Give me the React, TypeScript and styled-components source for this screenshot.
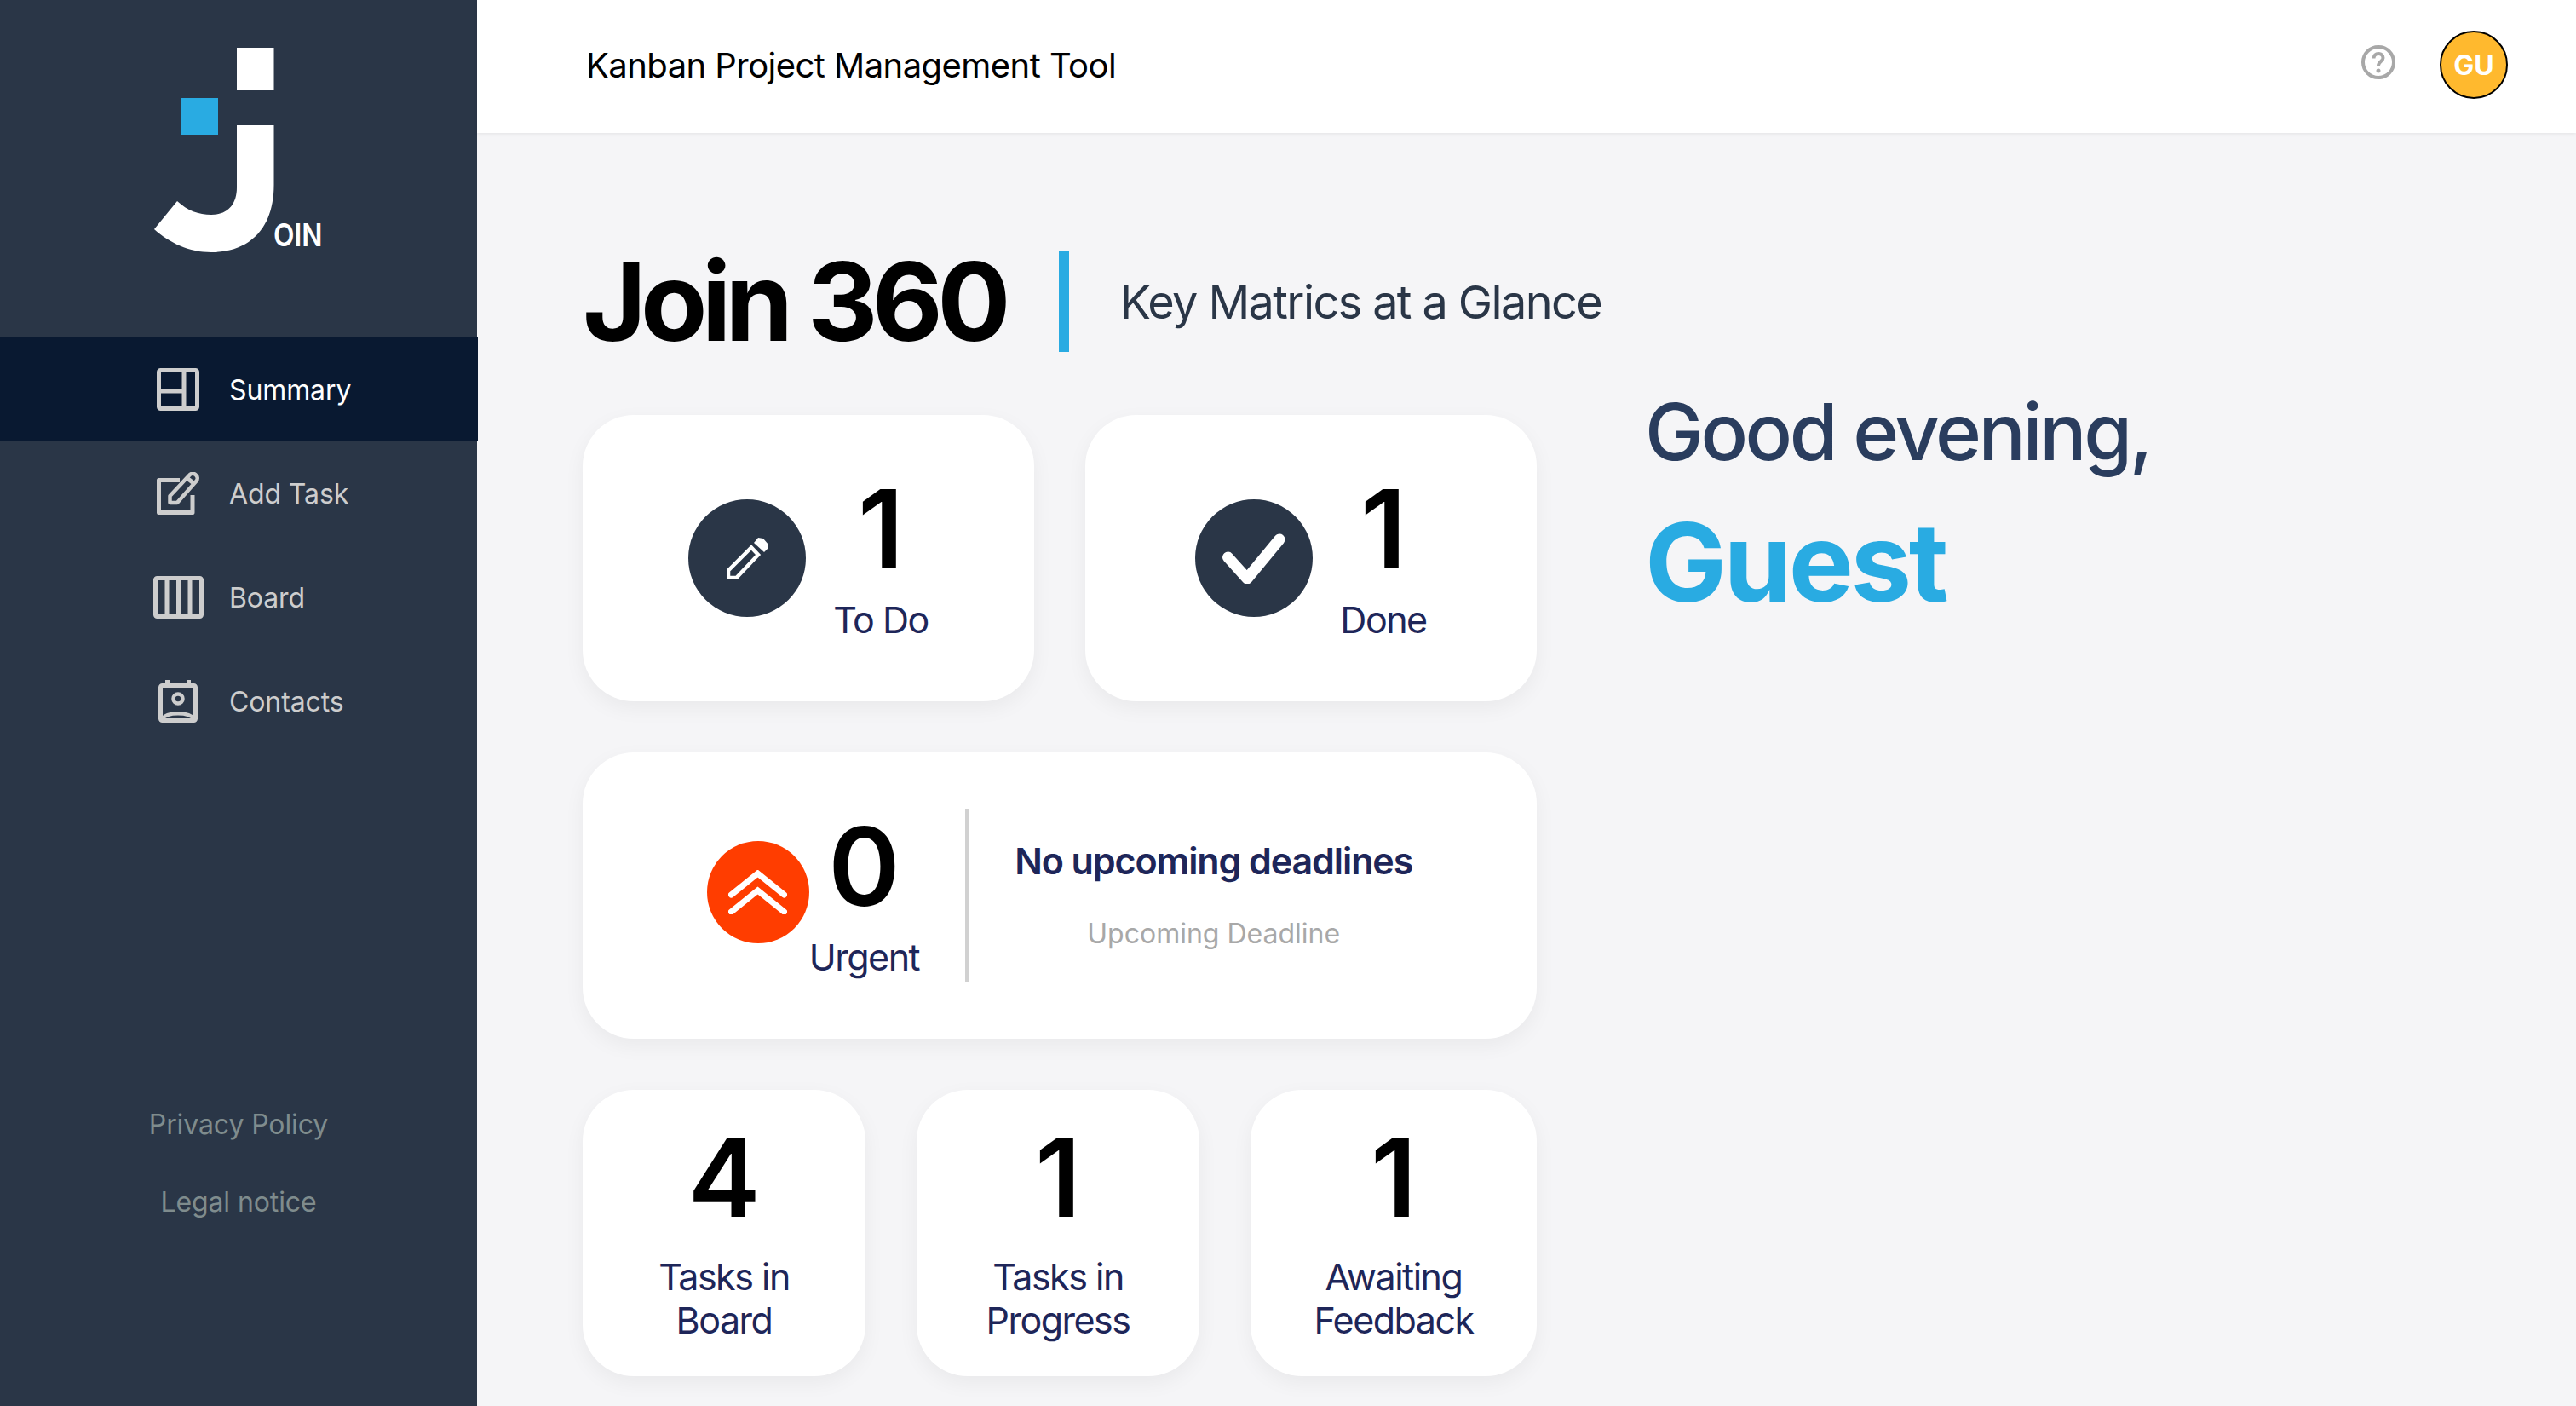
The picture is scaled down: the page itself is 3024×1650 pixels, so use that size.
import React from 'react';
import styled, { createGlobalStyle } from 'styled-components';

const GlobalStyle = createGlobalStyle`
  html, body { margin: 0; padding: 0; height: 100%; overflow: hidden; }
  body { font-family: Inter, "Noto Sans", sans-serif; background: #f5f5f7; }
  * { box-sizing: border-box; }
`;

const Shell = styled.div`
  display: flex;
  width: 100vw;
  height: 100vh;
`;

const Sidebar = styled.aside`
  width: 560px;
  flex: none;
  background: #2a3647;
  display: flex;
  flex-direction: column;
  padding-top: 56px;
`;

const Logo = styled.div`
  position: relative;
  width: 197px;
  height: 240px;
  margin: 0 0 100px 181px;
`;

const LogoMark = styled.svg`
  display: block;
  width: 197px;
  height: 240px;
`;

const LogoText = styled.span`
  position: absolute;
  left: 140px;
  top: 201px;
  font-size: 37px;
  line-height: 37px;
  font-weight: 600;
  color: #ffffff;
  transform: scaleX(0.86);
  transform-origin: left center;
`;

const Nav = styled.nav`
  display: flex;
  flex-direction: column;
`;

const NavItem = styled.a<{ $active?: boolean }>`
  height: 122px;
  display: flex;
  align-items: center;
  gap: 30px;
  padding-left: 179px;
  font-size: 32px;
  letter-spacing: -0.1px;
  margin-right: ${(p) => (p.$active ? '-1px' : '0')};
  color: ${(p) => (p.$active ? '#ffffff' : '#cdcdcd')};
  background: ${(p) => (p.$active ? '#091931' : 'transparent')};
`;

const NavIconBox = styled.span`
  width: 60px;
  height: 50px;
  display: flex;
  align-items: center;
  justify-content: center;
`;

const FooterLinks = styled.div`
  margin-top: auto;
  padding-bottom: 220px;
  display: flex;
  flex-direction: column;
  align-items: center;
  gap: 52px;
`;

const FooterLink = styled.a`
  font-size: 32px;
  line-height: 39px;
  letter-spacing: -0.1px;
  color: #7f8c8d;
`;

const Column = styled.div`
  flex: 1;
  min-width: 0;
  display: flex;
  flex-direction: column;
`;

const Header = styled.header`
  height: 156px;
  flex: none;
  background: #ffffff;
  box-shadow: 0 2px 4px rgba(0, 0, 0, 0.06);
  display: flex;
  align-items: flex-start;
  padding: 36px 80px 0 128px;
`;

const HeaderTitle = styled.h1`
  margin: 1px 0 0;
  flex: 1;
  font-size: 40px;
  line-height: 80px;
  font-weight: 400;
  letter-spacing: -0.55px;
  color: #000000;
`;

const HelpIcon = styled.svg`
  width: 40px;
  height: 40px;
  margin: 17px 52px 0 0;
`;

const Avatar = styled.div`
  width: 80px;
  height: 80px;
  border-radius: 50%;
  border: 2px solid #000000;
  background: #ffb92e;
  color: #ffffff;
  font-size: 32px;
  font-weight: 700;
  display: flex;
  align-items: center;
  justify-content: center;
`;

const Main = styled.main`
  flex: 1;
  padding: 139px 0 0 124px;
`;

const TitleRow = styled.div`
  display: flex;
  align-items: center;
  height: 118px;
  margin-bottom: 74px;
`;

const PageTitle = styled.h2`
  margin: 0;
  font-size: 128px;
  line-height: 118px;
  font-weight: 700;
  letter-spacing: -6.8px;
  color: #000000;
`;

const TitleBar = styled.div`
  width: 12px;
  height: 118px;
  background: #29abe2;
  margin: 0 60px 0 63px;
`;

const Subtitle = styled.p`
  margin: 0;
  font-size: 54px;
  letter-spacing: -1.6px;
  color: #2a3647;
`;

const Body = styled.div`
  display: flex;
  gap: 127px;
`;

const Cards = styled.div`
  width: 1120px;
  flex: none;
  display: flex;
  flex-direction: column;
  gap: 60px;
`;

const Row = styled.div`
  display: grid;
  grid-template-columns: 1fr 1fr;
  gap: 60px;
`;

const Card = styled.div`
  height: 336px;
  background: #ffffff;
  border-radius: 60px;
  box-shadow: 0 8px 24px rgba(0, 0, 0, 0.05);
  display: flex;
  align-items: center;
  justify-content: center;
`;

const Circle = styled.div<{ $size: number; $color: string }>`
  width: ${(p) => p.$size}px;
  height: ${(p) => p.$size}px;
  flex: none;
  border-radius: 50%;
  background: ${(p) => p.$color};
  display: flex;
  align-items: center;
  justify-content: center;
`;

const StatCard = styled(Card)`
  gap: 32px;
`;

const Stat = styled.div`
  display: flex;
  flex-direction: column;
  align-items: center;
`;

const Num = styled.div`
  font-size: 128px;
  line-height: 144px;
  font-weight: 600;
  color: #000000;
`;

const Label = styled.div`
  font-size: 43px;
  line-height: 68px;
  letter-spacing: -1.5px;
  color: #1e2659;
`;

const UrgentCircle = styled(Circle)`
  margin-top: -8px;
`;

const Divider = styled.div`
  width: 4px;
  height: 204px;
  background: #d1d1d1;
  margin: 0 54px;
`;

const Deadline = styled.div`
  display: flex;
  flex-direction: column;
  align-items: center;
  gap: 38px;
`;

const DeadlineTitle = styled.div`
  font-size: 43px;
  line-height: 52px;
  font-weight: 600;
  letter-spacing: -1.1px;
  color: #1e2659;
`;

const DeadlineSub = styled.div`
  font-size: 32px;
  line-height: 44px;
  color: #a8a8a8;
`;

const SmallRow = styled.div`
  display: grid;
  grid-template-columns: 332px 332px 336px;
  gap: 60px;
`;

const SmallCard = styled(Card)`
  flex-direction: column;
  justify-content: flex-start;
  padding-top: 31px;
`;

const SmallLabel = styled.div`
  margin-top: 19px;
  font-size: 43px;
  line-height: 51px;
  letter-spacing: -1.5px;
  text-align: center;
  color: #1e2659;
`;

const Greeting = styled.div`
  display: flex;
  flex-direction: column;
`;

const GreetingLine = styled.div`
  font-size: 92px;
  line-height: 96px;
  font-weight: 500;
  letter-spacing: -3.4px;
  color: #2a3d5e;
  margin-top: -28px;
`;

const GuestName = styled.div`
  font-size: 128px;
  line-height: 160px;
  font-weight: 700;
  letter-spacing: -3.5px;
  color: #29abe2;
  margin-top: 25px;
`;

const stroke = { fill: 'none', stroke: 'currentColor', strokeWidth: 5 } as const;

const App = () => (
  <Shell>
    <GlobalStyle />
    <Sidebar>
      <Logo>
        <LogoMark viewBox="0 0 197 240" aria-label="Join logo">
          <rect x="97" y="0" width="43.5" height="50" fill="#ffffff" />
          <rect x="31" y="59" width="44" height="44" fill="#29abe2" />
          <path
            d="M97 91 H140.5 V161 C140.5 212 112 240 67 240 C41 240 18 229 0 213 L27 180 C39 191 52 196 67 196 C85 196 97 185 97 164 Z"
            fill="#ffffff"
          />
        </LogoMark>
        <LogoText>OIN</LogoText>
      </Logo>
      <Nav>
        <NavItem $active>
          <NavIconBox>
            <svg width="50" height="50" viewBox="0 0 50 50" color="#cdcdcd">
              <rect x="2.5" y="2.5" width="45" height="45" rx="2" {...stroke} />
              <path d="M32 3V47M3 27H32" {...stroke} />
            </svg>
          </NavIconBox>
          Summary
        </NavItem>
        <NavItem>
          <NavIconBox>
            <svg width="50" height="50" viewBox="0 0 50 50" color="#cdcdcd">
              <path d="M27 9.5H2.5V47.5H42V27" {...stroke} strokeLinejoin="round" />
              <path d="M15.5 36V28L38 4C40 1.5 43 1 45.5 3C48 5 48.5 8 46.5 10.5L24 36Z" {...stroke} strokeWidth="4.5" strokeLinejoin="round" />
              <path d="M37 5L46 12L43 16L34 9Z" fill="currentColor" />
            </svg>
          </NavIconBox>
          Add Task
        </NavItem>
        <NavItem>
          <NavIconBox>
            <svg width="59" height="50" viewBox="0 0 59 50" color="#cdcdcd">
              <rect x="2.5" y="2.5" width="54" height="45" rx="2" {...stroke} />
              <path d="M16 3V47M29.5 3V47M43 3V47" {...stroke} />
            </svg>
          </NavIconBox>
          Board
        </NavItem>
        <NavItem>
          <NavIconBox>
            <svg width="46" height="50" viewBox="0 0 46 50" color="#cdcdcd">
              <rect x="2.5" y="6.5" width="41" height="41" rx="2" {...stroke} />
              <path d="M10.5 0V7M35.5 0V7" {...stroke} />
              <circle cx="23" cy="22" r="5.5" {...stroke} strokeWidth="4.5" />
              <path d="M4 46C10 37 36 37 42 46" {...stroke} strokeWidth="4.5" />
            </svg>
          </NavIconBox>
          Contacts
        </NavItem>
      </Nav>
      <FooterLinks>
        <FooterLink>Privacy Policy</FooterLink>
        <FooterLink>Legal notice</FooterLink>
      </FooterLinks>
    </Sidebar>
    <Column>
      <Header>
        <HeaderTitle>Kanban Project Management Tool</HeaderTitle>
        <HelpIcon viewBox="0 0 40 40" color="#a8a8a8">
          <circle cx="20" cy="20" r="18" fill="none" stroke="currentColor" strokeWidth="4" />
          <path d="M14.5 15.5C14.5 12 17 10 20 10C23 10 25.5 12 25.5 15C25.5 19 20 19 20 24" fill="none" stroke="currentColor" strokeWidth="4" />
          <circle cx="20" cy="30" r="2.5" fill="currentColor" />
        </HelpIcon>
        <Avatar>GU</Avatar>
      </Header>
      <Main>
        <TitleRow>
          <PageTitle>Join 360</PageTitle>
          <TitleBar />
          <Subtitle>Key Matrics at a Glance</Subtitle>
        </TitleRow>
        <Body>
          <Cards>
            <Row>
              <StatCard>
                <Circle $size={138} $color="#2a3647">
                  <svg width="49" height="49" viewBox="0 0 49 49">
                    <path d="M2 38.5L29 11.5L37 20L11.5 47H2Z" fill="none" stroke="#ffffff" strokeWidth="4.5" />
                    <path d="M32 6L37 0L43 1L49 8L48 13L44 17Z" fill="#ffffff" />
                  </svg>
                </Circle>
                <Stat>
                  <Num>1</Num>
                  <Label>To Do</Label>
                </Stat>
              </StatCard>
              <StatCard>
                <Circle $size={138} $color="#2a3647">
                  <svg width="74" height="59" viewBox="0 0 74 59">
                    <path d="M6.5 28L29 53L67 7" fill="none" stroke="#ffffff" strokeWidth="13" strokeLinecap="round" strokeLinejoin="round" />
                  </svg>
                </Circle>
                <Stat>
                  <Num>1</Num>
                  <Label>Done</Label>
                </Stat>
              </StatCard>
            </Row>
            <Card>
              <UrgentCircle $size={120} $color="#ff3d00">
                <svg width="69" height="52" viewBox="0 0 69 52">
                  <path d="M3.5 29L34.5 4L65.5 29M3.5 49L34.5 24L65.5 49" fill="none" stroke="#ffffff" strokeWidth="7" strokeLinecap="round" />
                </svg>
              </UrgentCircle>
              <Stat>
                <Num>0</Num>
                <Label>Urgent</Label>
              </Stat>
              <Divider />
              <Deadline>
                <DeadlineTitle>No upcoming deadlines</DeadlineTitle>
                <DeadlineSub>Upcoming Deadline</DeadlineSub>
              </Deadline>
            </Card>
            <SmallRow>
              <SmallCard>
                <Num>4</Num>
                <SmallLabel>
                  Tasks in
                  <br />
                  Board
                </SmallLabel>
              </SmallCard>
              <SmallCard>
                <Num>1</Num>
                <SmallLabel>
                  Tasks in
                  <br />
                  Progress
                </SmallLabel>
              </SmallCard>
              <SmallCard>
                <Num>1</Num>
                <SmallLabel>
                  Awaiting
                  <br />
                  Feedback
                </SmallLabel>
              </SmallCard>
            </SmallRow>
          </Cards>
          <Greeting>
            <GreetingLine>Good evening,</GreetingLine>
            <GuestName>Guest</GuestName>
          </Greeting>
        </Body>
      </Main>
    </Column>
  </Shell>
);

export default App;
